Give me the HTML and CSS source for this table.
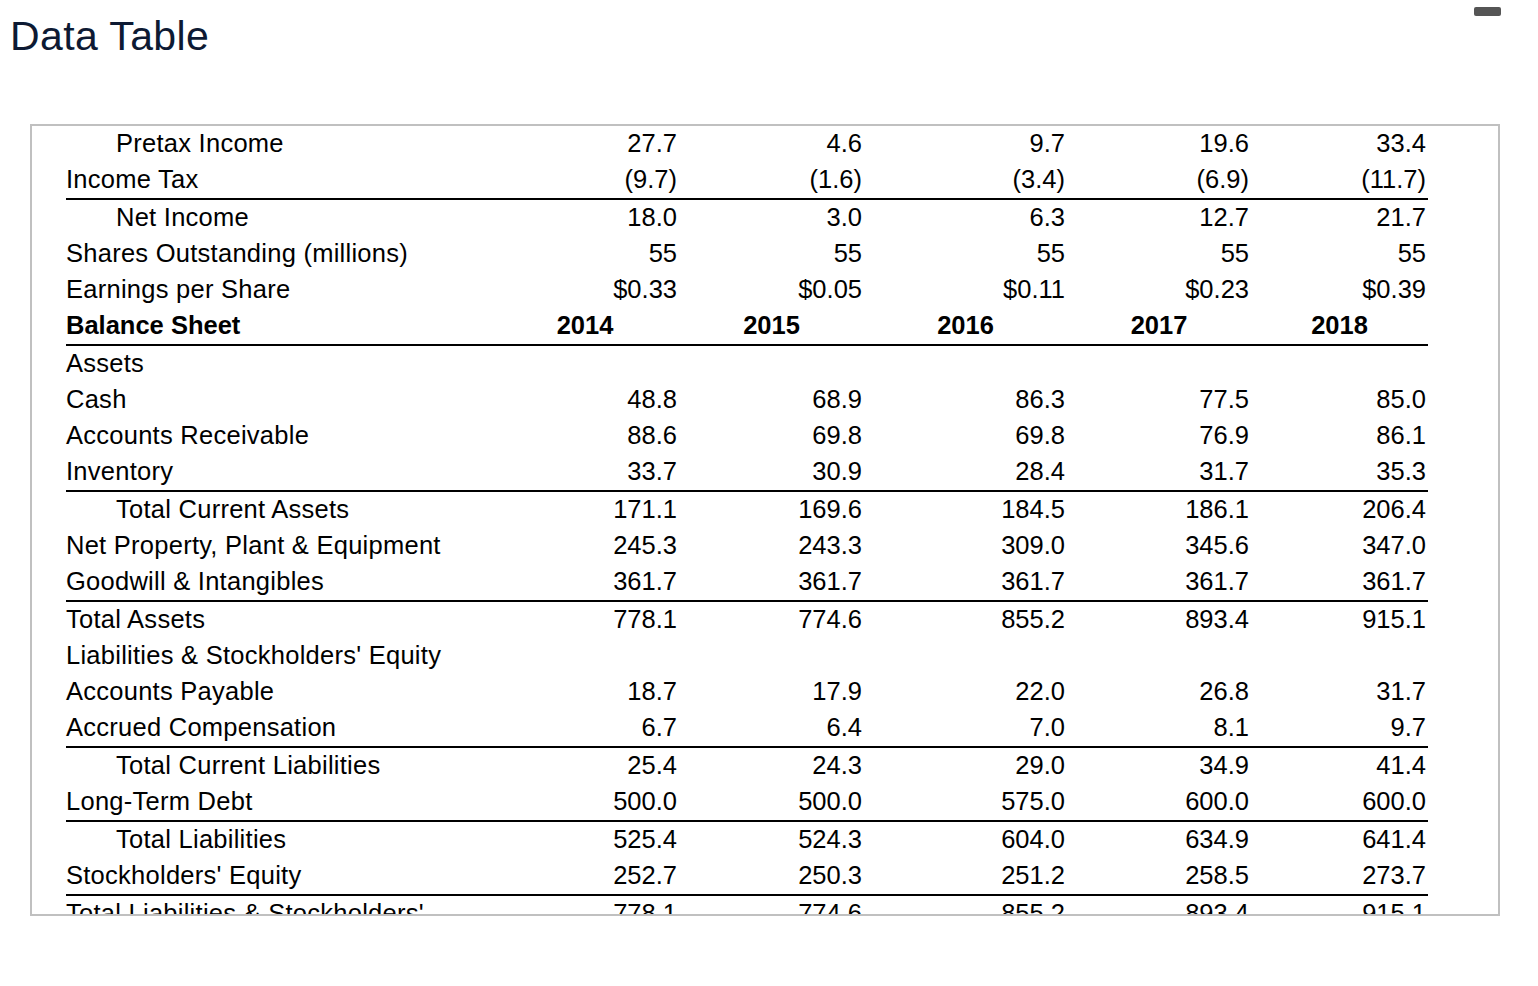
FILE: index.html
```html
<!DOCTYPE html>
<html lang="en">
<head>
<meta charset="utf-8">
<title>Data Table</title>
<link rel="stylesheet" href="styles.css">
</head>
<body>
<header class="top">
  <h1 class="title">Data Table</h1>
  <span class="minimize" aria-label="Minimize"></span>
</header>
<div class="panel">
  <table class="data">
    <colgroup>
      <col class="c-label">
      <col class="c-y1">
      <col class="c-y2">
      <col class="c-y3">
      <col class="c-y4">
      <col class="c-y5">
    </colgroup>
    <tbody>
      <tr><td class="lbl indent">Pretax Income</td><td>27.7</td><td>4.6</td><td>9.7</td><td>19.6</td><td>33.4</td></tr>
      <tr><td class="lbl">Income Tax</td><td>(9.7)</td><td>(1.6)</td><td>(3.4)</td><td>(6.9)</td><td>(11.7)</td></tr>
      <tr class="rule"><td class="lbl indent">Net Income</td><td>18.0</td><td>3.0</td><td>6.3</td><td>12.7</td><td>21.7</td></tr>
      <tr><td class="lbl">Shares Outstanding (millions)</td><td>55</td><td>55</td><td>55</td><td>55</td><td>55</td></tr>
      <tr><td class="lbl">Earnings per Share</td><td>$0.33</td><td>$0.05</td><td>$0.11</td><td>$0.23</td><td>$0.39</td></tr>
      <tr class="head"><td class="lbl">Balance Sheet</td><td>2014</td><td>2015</td><td>2016</td><td>2017</td><td>2018</td></tr>
      <tr class="rule"><td class="lbl">Assets</td><td></td><td></td><td></td><td></td><td></td></tr>
      <tr><td class="lbl">Cash</td><td>48.8</td><td>68.9</td><td>86.3</td><td>77.5</td><td>85.0</td></tr>
      <tr><td class="lbl">Accounts Receivable</td><td>88.6</td><td>69.8</td><td>69.8</td><td>76.9</td><td>86.1</td></tr>
      <tr><td class="lbl">Inventory</td><td>33.7</td><td>30.9</td><td>28.4</td><td>31.7</td><td>35.3</td></tr>
      <tr class="rule"><td class="lbl indent">Total Current Assets</td><td>171.1</td><td>169.6</td><td>184.5</td><td>186.1</td><td>206.4</td></tr>
      <tr><td class="lbl">Net Property, Plant &amp; Equipment</td><td>245.3</td><td>243.3</td><td>309.0</td><td>345.6</td><td>347.0</td></tr>
      <tr><td class="lbl">Goodwill &amp; Intangibles</td><td>361.7</td><td>361.7</td><td>361.7</td><td>361.7</td><td>361.7</td></tr>
      <tr class="rule"><td class="lbl">Total Assets</td><td>778.1</td><td>774.6</td><td>855.2</td><td>893.4</td><td>915.1</td></tr>
      <tr><td class="lbl">Liabilities &amp; Stockholders' Equity</td><td></td><td></td><td></td><td></td><td></td></tr>
      <tr><td class="lbl">Accounts Payable</td><td>18.7</td><td>17.9</td><td>22.0</td><td>26.8</td><td>31.7</td></tr>
      <tr><td class="lbl">Accrued Compensation</td><td>6.7</td><td>6.4</td><td>7.0</td><td>8.1</td><td>9.7</td></tr>
      <tr class="rule"><td class="lbl indent">Total Current Liabilities</td><td>25.4</td><td>24.3</td><td>29.0</td><td>34.9</td><td>41.4</td></tr>
      <tr><td class="lbl">Long-Term Debt</td><td>500.0</td><td>500.0</td><td>575.0</td><td>600.0</td><td>600.0</td></tr>
      <tr class="rule"><td class="lbl indent">Total Liabilities</td><td>525.4</td><td>524.3</td><td>604.0</td><td>634.9</td><td>641.4</td></tr>
      <tr><td class="lbl">Stockholders' Equity</td><td>252.7</td><td>250.3</td><td>251.2</td><td>258.5</td><td>273.7</td></tr>
      <tr class="rule"><td class="lbl">Total Liabilities &amp; Stockholders' Equity</td><td>778.1</td><td>774.6</td><td>855.2</td><td>893.4</td><td>915.1</td></tr>
    </tbody>
  </table>
</div>
</body>
</html>
```
FILE: styles.css
```css
html, body {
  margin: 0;
  padding: 0;
  background: #ffffff;
}

body {
  font-family: "Liberation Sans", Arial, Helvetica, sans-serif;
  color: #000000;
  width: 1538px;
  height: 986px;
  overflow: hidden;
}

.top {
  display: flex;
  justify-content: space-between;
  align-items: flex-start;
  height: 124px;
}

.title {
  margin: 0;
  padding: 12px 0 0 10px;
  font-size: 41px;
  line-height: 48px;
  letter-spacing: 0.4px;
  font-weight: normal;
  color: #0d1a33;
}

.minimize {
  display: block;
  width: 27px;
  height: 9px;
  margin: 7px 37px 0 0;
  background: #555555;
  border-radius: 2px;
}

.panel {
  box-sizing: border-box;
  margin-left: 30px;
  width: 1470px;
  height: 792px;
  border: 2px solid #c0c0c0;
  padding: 0 0 0 34px;
  overflow: hidden;
}

.data {
  table-layout: fixed;
  width: 1362px;
  border-collapse: separate;
  border-spacing: 0;
  font-size: 25.5px;
}

.c-label { width: 425px; }
.c-y1 { width: 188px; }
.c-y2 { width: 185px; }
.c-y3 { width: 203px; }
.c-y4 { width: 184px; }
.c-y5 { width: 177px; }

.data td {
  padding: 0 2px 2px 2px;
  line-height: 34px;
  text-align: right;
  vertical-align: top;
  white-space: nowrap;
}

.data td.lbl {
  text-align: left;
  padding-left: 0;
  white-space: normal;
  letter-spacing: 0.26px;
}

.data td.indent {
  padding-left: 50px;
}

.data tr.rule td {
  border-top: 2px solid #000000;
}

.data tr.head td {
  font-weight: bold;
  text-align: center;
}

.data tr.head td.lbl {
  text-align: left;
  letter-spacing: 0;
}
```
